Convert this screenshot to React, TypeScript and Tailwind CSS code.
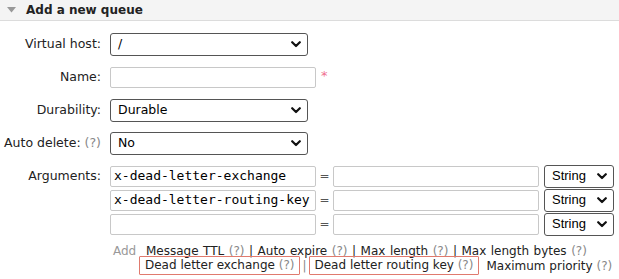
import React from "react";

const Chevron = () => (
  <svg width="10" height="7" viewBox="0 0 10 7" className="pointer-events-none">
    <path d="M1.2 1.2 L5 5 L8.8 1.2" fill="none" stroke="#111" strokeWidth="2.2" strokeLinecap="round" strokeLinejoin="round" />
  </svg>
);

function Select({ value, w, font = "dejavu" }: { value: string; w: string; font?: string }) {
  return (
    <div
      className={`${w} h-[23px] border border-[#555] rounded-[3px] bg-white flex items-center justify-between pl-[7px] pr-[6px] box-border`}
    >
      <span
        className={
          font === "arial"
            ? "text-[13px] text-black [font-family:'Liberation_Sans',Arial,sans-serif]"
            : "text-[12.5px] text-black [font-family:'DejaVu_Sans',Verdana,sans-serif]"
        }
      >
        {value}
      </span>
      <Chevron />
    </div>
  );
}

function Input({ w, value }: { w: string; value?: string }) {
  return (
    <div
      className={`${w} h-[21px] border border-[#c8c8c8] rounded-[2px] bg-white flex items-center pl-[3px] box-border overflow-hidden`}
    >
      <span className="text-[13px] text-black whitespace-nowrap [font-family:'DejaVu_Sans_Mono',Menlo,monospace]">
        {value ?? ""}
      </span>
    </div>
  );
}

const Q = () => <span className="text-[#888]">(?)</span>;

function Row({ label, children, help }: { label: string; children: React.ReactNode; help?: boolean }) {
  return (
    <div className="flex items-center h-[33px]">
      <div className="w-[101px] flex justify-end whitespace-nowrap text-[12.5px]">
        <span>
          {label}
          {help ? (
            <>
              {" "}
              <Q />
            </>
          ) : null}
        </span>
      </div>
      <div className="ml-[9px] flex items-center">{children}</div>
    </div>
  );
}

function ArgRow({ k }: { k: string }) {
  return (
    <div className="flex items-center h-[24px]">
      <Input w="w-[206px]" value={k} />
      <span className="w-[17px] text-center text-[#555]">=</span>
      <Input w="w-[206px]" />
      <div className="ml-[5px]">
        <Select value="String" w="w-[70px]" font="arial" />
      </div>
    </div>
  );
}

export default function App() {
  return (
    <div className="w-[619px] h-[279px] bg-white overflow-hidden text-[12px] text-[#222] [font-family:'DejaVu_Sans',Verdana,sans-serif]">
      <div className="h-[21px] bg-[#f4f4f4] border-b border-[#dcdcdc] flex items-center">
        <svg width="10" height="8" viewBox="0 0 10 8" className="ml-[7px]">
          <path d="M0 1 L9 1 L4.5 6.5 Z" fill="#999" />
        </svg>
        <span className="ml-[9px] font-bold text-[12px] text-[#222]">Add a new queue</span>
      </div>
      <div className="mt-[7px]">
        <Row label="Virtual host:">
          <Select value="/" w="w-[198px]" />
        </Row>
        <Row label="Name:">
          <Input w="w-[206px]" />
          <span className="ml-[5px] text-[#f07090] text-[13px] -mt-[4px]">*</span>
        </Row>
        <Row label="Durability:">
          <Select value="Durable" w="w-[198px]" />
        </Row>
        <Row label="Auto delete:" help>
          <Select value="No" w="w-[198px]" />
        </Row>
        <div className="flex items-start mt-[4px]">
          <div className="w-[101px] text-right h-[24px] flex items-center justify-end text-[12.5px]">Arguments:</div>
          <div className="ml-[9px]">
            <ArgRow k="x-dead-letter-exchange" />
            <ArgRow k="x-dead-letter-routing-key" />
            <ArgRow k="" />
          </div>
        </div>
        <div className="ml-[113px] mt-[8px]">
          <div className="flex leading-[14px]">
            <span className="text-[#999] w-[33px]">Add</span>
            <span className="whitespace-nowrap [word-spacing:0.7px]">
              Message TTL <Q /> | Auto expire <Q /> | Max length <Q /> | Max length bytes <Q />
            </span>
          </div>
          <div className="flex items-center ml-[26px] -mt-[2px] whitespace-nowrap">
            <span className="border border-[#e07a6e] rounded-[1px] px-[5px] leading-[17px]">
              Dead letter exchange <Q />
            </span>
            <span className="mx-[2px] text-[#888]">|</span>
            <span className="border border-[#e07a6e] rounded-[1px] px-[5px] leading-[17px]">
              Dead letter routing key <Q />
            </span>
            <span className="ml-[7px]">
              Maximum priority <Q />
            </span>
          </div>
        </div>
      </div>
    </div>
  );
}
